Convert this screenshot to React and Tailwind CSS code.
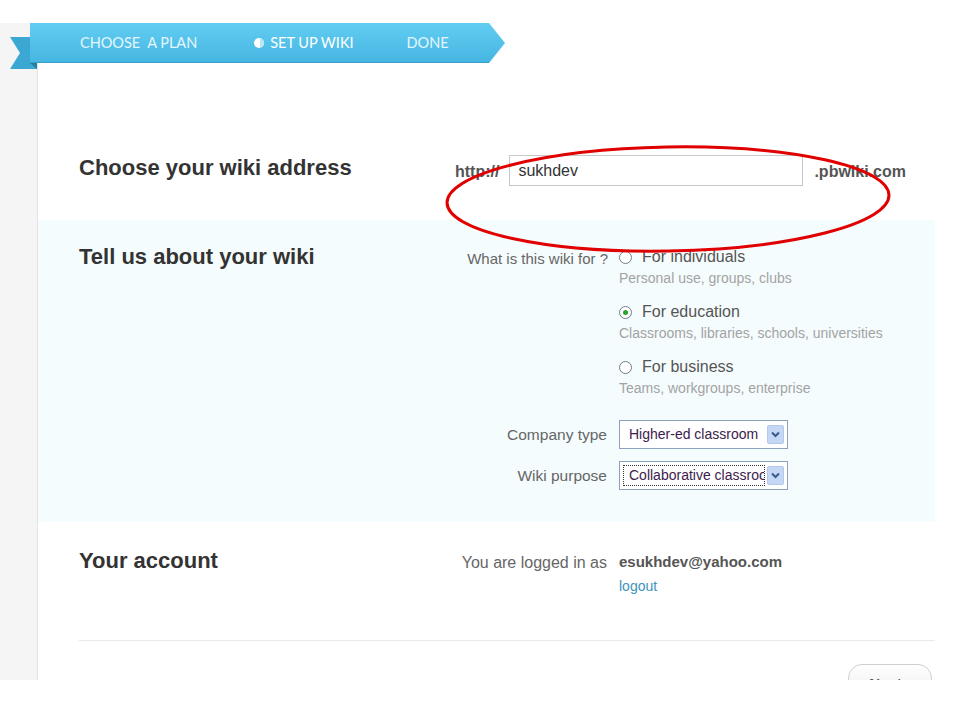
import React from 'react';

const font = { fontFamily: '"Liberation Sans", Arial, sans-serif' };

function Ribbon() {
  return (
    <div className="absolute left-0 top-[23px] w-[510px] h-[48px]">
      <svg width="510" height="48" viewBox="0 0 510 48" className="absolute left-0 top-0">
        <defs>
          <linearGradient id="rib" x1="0" y1="0" x2="0" y2="1">
            <stop offset="0" stopColor="#62cdf2" />
            <stop offset="1" stopColor="#45b5e1" />
          </linearGradient>
        </defs>
        <polygon points="10,14 37,14 37,46 10,46 20,30" fill="#3aa8d2" />
        <polygon points="30,40 37,40 37,46" fill="#23819f" />
        <polygon points="30,0 489,0 505,20 489,40 30,40" fill="url(#rib)" />
        <line x1="30" y1="39.5" x2="489" y2="39.5" stroke="#3a9fc8" strokeWidth="1" />
      </svg>
      <div
        className="absolute left-[30px] top-0 h-[40px] flex items-center text-[14.5px] text-white"
        style={{ fontFamily: 'Lato, "Open Sans", sans-serif' }}
      >
        <span className="ml-[50px] text-white/85">CHOOSE&nbsp; A PLAN</span>
        <span className="ml-[57px] flex items-center gap-[6px]">
          <span className="w-[10px] h-[10px] rounded-full bg-white relative overflow-hidden">
            <span className="absolute right-0 top-0 w-[4px] h-[10px] bg-[#b8e6f7]" />
          </span>
          SET UP WIKI
        </span>
        <span className="ml-[53px] text-white/85">DONE</span>
      </div>
    </div>
  );
}

function Radio({ checked }) {
  return (
    <span className="w-[13px] h-[13px] rounded-full border border-[#6f7f8f] bg-white flex items-center justify-center shrink-0">
      {checked && <span className="w-[5px] h-[5px] rounded-full bg-[#2aa52a]" />}
    </span>
  );
}

function Option({ title, desc, checked }) {
  return (
    <div className="flex flex-col">
      <div className="flex items-center gap-[10px] h-[20px]">
        <Radio checked={checked} />
        <span className="text-[16px] text-[#555]">{title}</span>
      </div>
      <div className="text-[14px] text-[#a3a3a3] mt-[1px]">{desc}</div>
    </div>
  );
}

function Select({ value, focused }) {
  return (
    <div className="w-[169px] h-[29px] border border-[#8aa2bd] bg-white flex items-center pl-[3px] pr-[3px]">
      <span
        className={
          'flex-1 overflow-hidden whitespace-nowrap text-[14px] text-[#3d1b4c] pl-[5px] h-[21px] leading-[19px] ' +
          (focused ? 'border border-dotted border-[#333]' : 'border border-transparent')
        }
      >
        {value}
      </span>
      <span className="w-[17px] h-[19px] ml-[2px] bg-[#c4d8f6] border border-[#b3c8ea] rounded-[2px] flex items-center justify-center">
        <svg width="9" height="7" viewBox="0 0 9 7">
          <path d="M1 1.5 L4.5 5 L8 1.5" fill="none" stroke="#3a5a8a" strokeWidth="2" />
        </svg>
      </span>
    </div>
  );
}

export default function App() {
  return (
    <div className="relative w-[960px] h-[720px] bg-white overflow-hidden" style={font}>
      <div className="h-[680px] overflow-hidden flex flex-col">
        <div className="h-[23px] shrink-0" />
        <div className="flex flex-1">
          <div className="w-[38px] shrink-0 bg-[#f5f5f5] border-r border-[#e4e4e4]" />
          <div className="flex-1 flex flex-col">
            {/* wiki address */}
            <div className="h-[197px] pt-[131px] pl-[41px] flex">
              <div className="w-[377px]">
                <h2 className="text-[22px] font-bold text-[#333] leading-[28px]">Choose your wiki address</h2>
              </div>
              <div className="flex items-center h-[31px] ml-[-1px] mt-[1px]">
                <span className="text-[16px] font-bold text-[#555] mt-[3px]">http://</span>
                <div className="ml-[10px] w-[294px] h-[31px] border border-[#c8c8c8] bg-white flex items-center pl-[8px] text-[16px] text-[#333]">
                  sukhdev
                </div>
                <span className="ml-[11px] text-[16px] font-bold text-[#555] mt-[3px]">.pbwiki.com</span>
              </div>
            </div>

            {/* about your wiki */}
            <div className="h-[302px] bg-[#f5fcfd] mr-[25px] pl-[41px] pt-[23px] flex">
              <div className="w-[343px]">
                <h2 className="text-[22px] font-bold text-[#333] leading-[28px]">Tell us about your wiki</h2>
              </div>
              <div className="flex flex-col pt-[3px]">
                <div className="flex">
                  <div className="w-[197px] text-right pr-[11px] text-[15px] text-[#666] pt-[2px]">What is this wiki for ?</div>
                  <div className="flex flex-col gap-[13px] pt-[1px]">
                    <Option title="For individuals" desc="Personal use, groups, clubs" />
                    <Option title="For education" desc="Classrooms, libraries, schools, universities" checked />
                    <Option title="For business" desc="Teams, workgroups, enterprise" />
                  </div>
                </div>
                <div className="flex items-center mt-[21px]">
                  <div className="w-[197px] text-right pr-[12px] text-[15.5px] text-[#666]">Company type</div>
                  <Select value="Higher-ed classroom" />
                </div>
                <div className="flex items-center mt-[12px]">
                  <div className="w-[197px] text-right pr-[12px] text-[15.5px] text-[#666]">Wiki purpose</div>
                  <Select value="Collaborative classroom" focused />
                </div>
              </div>
            </div>

            {/* account */}
            <div className="h-[118px] pl-[41px] pt-[25px] flex">
              <div className="w-[380px]">
                <h2 className="text-[22px] font-bold text-[#333] leading-[28px]">Your account</h2>
              </div>
              <div className="flex pt-[4px]">
                <div className="w-[160px] text-right pr-[12px] text-[16px] text-[#666]">You are logged in as</div>
                <div className="flex flex-col">
                  <span className="text-[15px] font-bold text-[#555]">esukhdev@yahoo.com</span>
                  <a className="text-[14px] text-[#3d93bd] mt-[2px]">logout</a>
                </div>
              </div>
            </div>

            <div className="ml-[41px] mr-[25px] border-t border-[#e9e9e9]" />

            <div className="flex justify-end mr-[28px] mt-[23px]">
              <div className="w-[84px] h-[34px] rounded-[14px] border border-[#cfcfcf] bg-gradient-to-b from-white to-[#ececec] flex items-start justify-center pt-[8px] text-[15px] font-bold text-[#555]">
                Next ›
              </div>
            </div>
          </div>
        </div>
      </div>

      <Ribbon />

      <svg className="absolute left-0 top-0 pointer-events-none" width="960" height="720">
        <ellipse cx="668" cy="199" rx="221" ry="52" fill="none" stroke="#e00000" strokeWidth="3" transform="rotate(-1 668 199)" />
      </svg>
    </div>
  );
}
